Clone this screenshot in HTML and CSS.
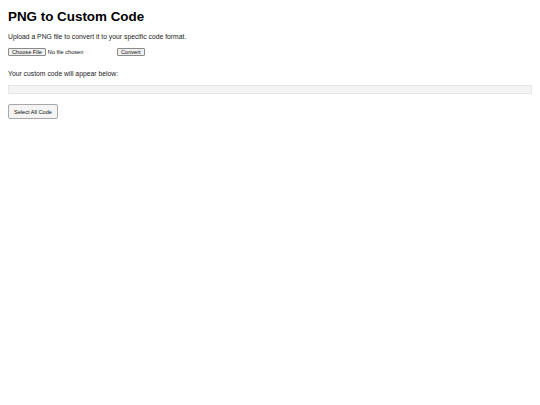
FILE: index.html
```html
<!DOCTYPE html>
<html>
<head>
<meta charset="utf-8">
<link rel="stylesheet" href="styles.css">
</head>
<body>
<div class="page">
  <h1 class="title">PNG to Custom Code</h1>
  <p class="intro">Upload a PNG file to convert it to your specific code format.</p>
  <div class="controls">
    <input type="file" class="file" accept="image/png">
    <button class="small-btn">Convert</button>
  </div>
  <p class="label">Your custom code will appear below:</p>
  <div class="output"></div>
  <button class="select-btn">Select All Code</button>
</div>
</body>
</html>
```
FILE: styles.css
```css
html, body {
  margin: 0;
  padding: 0;
  background: #fff;
}
.page {
  padding: 9px 8px 0 8px;
  font-family: "Liberation Sans", Arial, sans-serif;
  color: #111;
  display: flex;
  flex-direction: column;
  align-items: flex-start;
}
.title {
  font-size: 13.4px;
  font-weight: bold;
  margin: 0;
  line-height: 16px;
  color: #000;
}
.intro {
  font-size: 6.8px;
  margin: 7px 0 0 0;
  line-height: 9px;
  color: #222;
}
.controls {
  display: flex;
  align-items: center;
  margin-top: 7px;
  height: 8px;
}
.file {
  font-family: "Liberation Sans", Arial, sans-serif;
  font-size: 5.6px;
  width: 108px;
  margin: 0;
  color: #111;
}
.file::file-selector-button {
  font-family: "Liberation Sans", Arial, sans-serif;
  font-size: 5.6px;
  height: 8px;
  padding: 0 3px;
  margin: 0 2px 0 0;
  border: 1px solid #8a8a8a;
  border-radius: 1px;
  background: #efefef;
  color: #111;
  line-height: 6px;
}
.small-btn {
  font-family: "Liberation Sans", Arial, sans-serif;
  font-size: 5.6px;
  margin: 0 0 0 1px;
  padding: 0 3px;
  height: 8px;
  line-height: 6px;
  border: 1px solid #8a8a8a;
  border-radius: 1px;
  background: #efefef;
  color: #111;
}
.label {
  font-size: 6.8px;
  margin: 13px 0 0 0;
  line-height: 9px;
  color: #222;
}
.output {
  align-self: stretch;
  height: 7px;
  margin-top: 7px;
  background: #f4f4f4;
  border: 1px solid #e6e6e6;
}
.select-btn {
  font-family: "Liberation Sans", Arial, sans-serif;
  font-size: 5.6px;
  margin-top: 10px;
  height: 15px;
  padding: 0 5px;
  background: #f4f4f4;
  border: 1px solid #a8a8a8;
  border-radius: 2px;
  color: #111;
}
```
